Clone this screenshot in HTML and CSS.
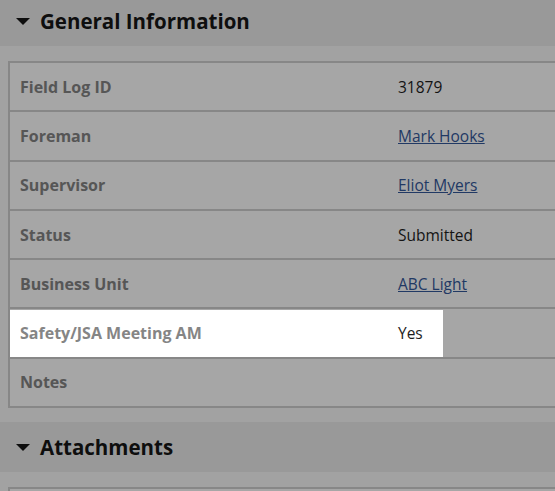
FILE: index.html
```html
<!DOCTYPE html>
<html lang="en">
<head>
    <meta charset="UTF-8">
    <meta name="viewport" content="width=device-width, initial-scale=1.0">
    <title>Field Log 31879</title>
    <link rel="stylesheet" href="styles.css">
</head>
<body>
    <div class="page">
        <section class="panel panel-first">
            <div class="panel-header">
                <span class="caret"></span>
                <h2>General Information</h2>
            </div>
            <div class="panel-body">
                <div class="info-table">
                    <div class="info-row">
                        <div class="info-label">Field Log ID</div>
                        <div class="info-value">31879</div>
                    </div>
                    <div class="info-row">
                        <div class="info-label">Foreman</div>
                        <div class="info-value"><a href="#">Mark Hooks</a></div>
                    </div>
                    <div class="info-row">
                        <div class="info-label">Supervisor</div>
                        <div class="info-value"><a href="#">Eliot Myers</a></div>
                    </div>
                    <div class="info-row">
                        <div class="info-label">Status</div>
                        <div class="info-value">Submitted</div>
                    </div>
                    <div class="info-row">
                        <div class="info-label">Business Unit</div>
                        <div class="info-value"><a href="#">ABC Light</a></div>
                    </div>
                    <div class="info-row highlighted">
                        <div class="info-label">Safety/JSA Meeting AM</div>
                        <div class="info-value">Yes</div>
                        <div class="spotlight"></div>
                    </div>
                    <div class="info-row">
                        <div class="info-label">Notes</div>
                        <div class="info-value"></div>
                    </div>
                </div>
            </div>
        </section>

        <section class="panel">
            <div class="panel-header">
                <span class="caret"></span>
                <h2>Attachments</h2>
            </div>
            <div class="panel-body">
                <div class="info-table attachments">
                    <div class="info-row">
                        <div class="info-label"></div>
                        <div class="info-value"></div>
                    </div>
                </div>
            </div>
        </section>
    </div>
</body>
</html>
```

FILE: styles.css
```css
:root {
    --fontFamily: "Open Sans", "Noto Sans", Arial, sans-serif;
    --colorHeader: #ececec;
    --colorPage: #f9f9f9;
    --colorBorder: #d0d0d0;
    --colorLabel: #858585;
    --colorLink: #34589a;
    --overlay: rgba(0, 0, 0, 0.35);
}

html, body {
    margin: 0;
    padding: 0;
    overflow: hidden;
}

body {
    font-family: var(--fontFamily);
    background-color: var(--colorPage);
    color: #1e1e1e;
}

.page {
    width: 100%;
}

.panel-first {
    margin-top: -4px;
}

.panel-header {
    display: flex;
    align-items: center;
    gap: 10px;
    height: 50px;
    padding-left: 16px;
    background-color: var(--colorHeader);
}

.caret {
    width: 0;
    height: 0;
    border-left: 7px solid transparent;
    border-right: 7px solid transparent;
    border-top: 7px solid #161616;
    margin-top: 1px;
}

.panel-header h2 {
    margin: 0;
    font-size: 20.5px;
    font-weight: 700;
    color: #161616;
}

.panel-body {
    padding: 15px 0 14px 8px;
    margin-right: -60px;
}

.info-table {
    border: 2px solid var(--colorBorder);
    background-color: #fff;
}

.info-row {
    display: grid;
    grid-template-columns: 388px 1fr;
    align-items: center;
    min-height: 47.3px;
    position: relative;
}

.info-row + .info-row {
    border-top: 2px solid var(--colorBorder);
}

.info-label {
    padding-left: 10px;
    font-size: 16px;
    font-weight: 700;
    color: var(--colorLabel);
}

.info-value {
    font-size: 15.5px;
    color: #1e1e1e;
}

.info-value a {
    color: var(--colorLink);
}

.spotlight {
    position: absolute;
    left: 0;
    top: 1px;
    bottom: 0;
    width: 433px;
    z-index: 10;
    box-shadow: 0 0 0 2000px var(--overlay);
}
```
